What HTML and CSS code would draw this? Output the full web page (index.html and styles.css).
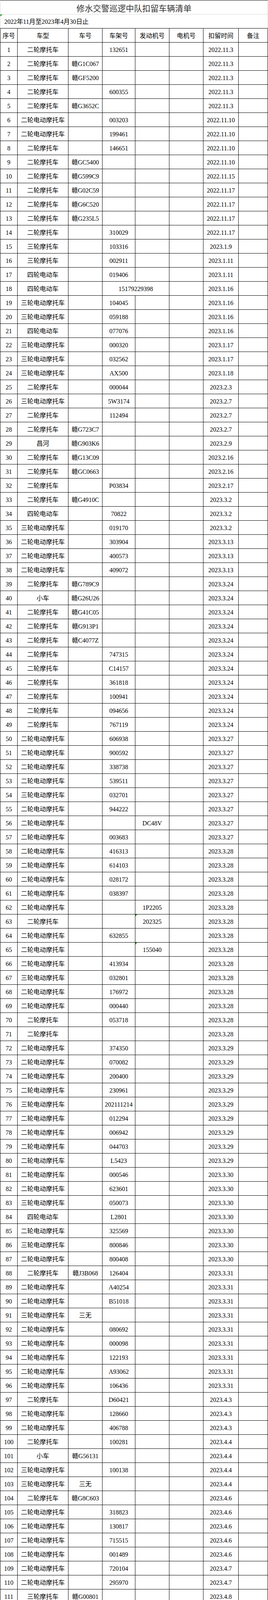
FILE: index.html
```html
<!DOCTYPE html>
<html lang="zh-CN">
<head>
<meta charset="utf-8">
<title>修水交警巡逻中队扣留车辆清单</title>
<link rel="stylesheet" href="styles.css">
</head>
<body>
<div class="page">
<div class="sheet">
<div class="title">修水交警巡逻中队扣留车辆清单</div>
<div class="sub flag">2022年11月至2023年4月30日止</div>
<div class="r"><span>序号</span><span>车型</span><span>车号</span><span>车架号</span><span>发动机号</span><span>电机号</span><span>扣留时间</span><span>备注</span></div>
<div class="r"><span>1</span><span>二轮摩托车</span><span></span><span>132651</span><span></span><span></span><span>2022.11.3</span><span></span></div>
<div class="r"><span>2</span><span>二轮摩托车</span><span>赣G1C067</span><span></span><span></span><span></span><span>2022.11.3</span><span></span></div>
<div class="r"><span>3</span><span>二轮摩托车</span><span>赣GF5200</span><span></span><span></span><span></span><span>2022.11.3</span><span></span></div>
<div class="r"><span>4</span><span>二轮摩托车</span><span></span><span>600355</span><span></span><span></span><span>2022.11.3</span><span></span></div>
<div class="r"><span>5</span><span>二轮摩托车</span><span>赣G3652C</span><span></span><span></span><span></span><span>2022.11.3</span><span></span></div>
<div class="r"><span>6</span><span>二轮电动摩托车</span><span></span><span>003203</span><span></span><span></span><span>2022.11.10</span><span></span></div>
<div class="r"><span>7</span><span>二轮电动摩托车</span><span></span><span>199461</span><span></span><span></span><span>2022.11.10</span><span></span></div>
<div class="r"><span>8</span><span>二轮摩托车</span><span></span><span>146651</span><span></span><span></span><span>2022.11.10</span><span></span></div>
<div class="r"><span>9</span><span>二轮摩托车</span><span>赣GC5400</span><span></span><span></span><span></span><span>2022.11.10</span><span></span></div>
<div class="r"><span>10</span><span>二轮摩托车</span><span>赣G599C9</span><span></span><span></span><span></span><span>2022.11.15</span><span></span></div>
<div class="r"><span>11</span><span>二轮摩托车</span><span>赣G02C59</span><span></span><span></span><span></span><span>2022.11.17</span><span></span></div>
<div class="r"><span>12</span><span>二轮摩托车</span><span>赣G6C520</span><span></span><span></span><span></span><span>2022.11.17</span><span></span></div>
<div class="r"><span>13</span><span>二轮摩托车</span><span>赣G235L5</span><span></span><span></span><span></span><span>2022.11.17</span><span></span></div>
<div class="r"><span>14</span><span>二轮摩托车</span><span></span><span>310029</span><span></span><span></span><span>2022.11.17</span><span></span></div>
<div class="r"><span>15</span><span>三轮摩托车</span><span></span><span>103316</span><span></span><span></span><span>2023.1.9</span><span></span></div>
<div class="r"><span>16</span><span>三轮摩托车</span><span></span><span>002911</span><span></span><span></span><span>2023.1.11</span><span></span></div>
<div class="r"><span>17</span><span>四轮电动车</span><span></span><span>019406</span><span></span><span></span><span>2023.1.11</span><span></span></div>
<div class="r"><span>18</span><span>四轮电动车</span><span></span><span class="span2">15179229398</span><span></span><span>2023.1.16</span><span></span></div>
<div class="r"><span>19</span><span>三轮电动摩托车</span><span></span><span>104045</span><span></span><span></span><span>2023.1.16</span><span></span></div>
<div class="r"><span>20</span><span>三轮电动摩托车</span><span></span><span>059188</span><span></span><span></span><span>2023.1.16</span><span></span></div>
<div class="r"><span>21</span><span>四轮电动车</span><span></span><span>077076</span><span></span><span></span><span>2023.1.16</span><span></span></div>
<div class="r"><span>22</span><span>三轮电动摩托车</span><span></span><span>000320</span><span></span><span></span><span>2023.1.17</span><span></span></div>
<div class="r"><span>23</span><span>三轮电动摩托车</span><span></span><span>032562</span><span></span><span></span><span>2023.1.17</span><span></span></div>
<div class="r"><span>24</span><span>三轮电动摩托车</span><span></span><span>AX500</span><span></span><span></span><span>2023.1.18</span><span></span></div>
<div class="r"><span>25</span><span>二轮摩托车</span><span></span><span>000044</span><span></span><span></span><span>2023.2.3</span><span></span></div>
<div class="r"><span>26</span><span>三轮电动摩托车</span><span></span><span>5W3174</span><span></span><span></span><span>2023.2.7</span><span></span></div>
<div class="r"><span>27</span><span>二轮摩托车</span><span></span><span>112494</span><span></span><span></span><span>2023.2.7</span><span></span></div>
<div class="r"><span>28</span><span>二轮摩托车</span><span>赣G723C7</span><span></span><span></span><span></span><span>2023.2.7</span><span></span></div>
<div class="r"><span>29</span><span>昌河</span><span>赣G903K6</span><span></span><span></span><span></span><span>2023.2.9</span><span></span></div>
<div class="r"><span>30</span><span>二轮摩托车</span><span>赣G13C09</span><span></span><span></span><span></span><span>2023.2.16</span><span></span></div>
<div class="r"><span>31</span><span>二轮摩托车</span><span>赣GC0663</span><span></span><span></span><span></span><span>2023.2.16</span><span></span></div>
<div class="r"><span>32</span><span>二轮摩托车</span><span></span><span>P03834</span><span></span><span></span><span>2023.2.17</span><span></span></div>
<div class="r"><span>33</span><span>二轮摩托车</span><span>赣G4910C</span><span></span><span></span><span></span><span>2023.3.2</span><span></span></div>
<div class="r"><span>34</span><span>四轮电动车</span><span></span><span>70822</span><span></span><span></span><span>2023.3.2</span><span></span></div>
<div class="r"><span>35</span><span>三轮电动摩托车</span><span></span><span>019170</span><span></span><span></span><span>2023.3.2</span><span></span></div>
<div class="r"><span>36</span><span>二轮电动摩托车</span><span></span><span>303904</span><span></span><span></span><span>2023.3.13</span><span></span></div>
<div class="r"><span>37</span><span>二轮电动摩托车</span><span></span><span>400573</span><span></span><span></span><span>2023.3.13</span><span></span></div>
<div class="r"><span>38</span><span>二轮电动摩托车</span><span></span><span>409072</span><span></span><span></span><span>2023.3.13</span><span></span></div>
<div class="r"><span>39</span><span>二轮摩托车</span><span>赣G789C9</span><span></span><span></span><span></span><span>2023.3.24</span><span></span></div>
<div class="r"><span>40</span><span>小车</span><span>赣G26U26</span><span></span><span></span><span></span><span>2023.3.24</span><span></span></div>
<div class="r"><span>41</span><span>二轮摩托车</span><span>赣G41C05</span><span></span><span></span><span></span><span>2023.3.24</span><span></span></div>
<div class="r"><span>42</span><span>二轮摩托车</span><span>赣G913P1</span><span></span><span></span><span></span><span>2023.3.24</span><span></span></div>
<div class="r"><span>43</span><span>二轮摩托车</span><span>赣C4077Z</span><span></span><span></span><span></span><span>2023.3.24</span><span></span></div>
<div class="r"><span>44</span><span>二轮摩托车</span><span></span><span>747315</span><span></span><span></span><span>2023.3.24</span><span></span></div>
<div class="r"><span>45</span><span>二轮摩托车</span><span></span><span>C14157</span><span></span><span></span><span>2023.3.24</span><span></span></div>
<div class="r"><span>46</span><span>二轮摩托车</span><span></span><span>361818</span><span></span><span></span><span>2023.3.24</span><span></span></div>
<div class="r"><span>47</span><span>二轮摩托车</span><span></span><span>100941</span><span></span><span></span><span>2023.3.24</span><span></span></div>
<div class="r"><span>48</span><span>二轮摩托车</span><span></span><span>094656</span><span></span><span></span><span>2023.3.24</span><span></span></div>
<div class="r"><span>49</span><span>二轮摩托车</span><span></span><span>767119</span><span></span><span></span><span>2023.3.24</span><span></span></div>
<div class="r"><span>50</span><span>二轮电动摩托车</span><span></span><span>606938</span><span></span><span></span><span>2023.3.27</span><span></span></div>
<div class="r"><span>51</span><span>二轮电动摩托车</span><span></span><span>900592</span><span></span><span></span><span>2023.3.27</span><span></span></div>
<div class="r"><span>52</span><span>二轮电动摩托车</span><span></span><span>338738</span><span></span><span></span><span>2023.3.27</span><span></span></div>
<div class="r"><span>53</span><span>二轮电动摩托车</span><span></span><span>539511</span><span></span><span></span><span>2023.3.27</span><span></span></div>
<div class="r"><span>54</span><span>三轮电动摩托车</span><span></span><span>032701</span><span></span><span></span><span>2023.3.27</span><span></span></div>
<div class="r"><span>55</span><span>二轮电动摩托车</span><span></span><span>944222</span><span></span><span></span><span>2023.3.27</span><span></span></div>
<div class="r"><span>56</span><span>二轮电动摩托车</span><span></span><span></span><span>DC48V</span><span></span><span>2023.3.27</span><span></span></div>
<div class="r"><span>57</span><span>二轮电动摩托车</span><span></span><span>003683</span><span></span><span></span><span>2023.3.27</span><span></span></div>
<div class="r"><span>58</span><span>二轮电动摩托车</span><span></span><span>416313</span><span></span><span></span><span>2023.3.28</span><span></span></div>
<div class="r"><span>59</span><span>二轮电动摩托车</span><span></span><span>614103</span><span></span><span></span><span>2023.3.28</span><span></span></div>
<div class="r"><span>60</span><span>二轮电动摩托车</span><span></span><span>028172</span><span></span><span></span><span>2023.3.28</span><span></span></div>
<div class="r"><span>61</span><span>二轮电动摩托车</span><span></span><span>038397</span><span></span><span></span><span>2023.3.28</span><span></span></div>
<div class="r"><span>62</span><span>二轮电动摩托车</span><span></span><span></span><span>1P2205</span><span></span><span>2023.3.28</span><span></span></div>
<div class="r"><span>63</span><span>二轮摩托车</span><span></span><span></span><span class="flag">202325</span><span></span><span>2023.3.28</span><span></span></div>
<div class="r"><span>64</span><span>二轮电动摩托车</span><span></span><span>632855</span><span></span><span></span><span>2023.3.28</span><span></span></div>
<div class="r"><span>65</span><span>二轮电动摩托车</span><span></span><span></span><span class="flag">155040</span><span></span><span>2023.3.28</span><span></span></div>
<div class="r"><span>66</span><span>二轮电动摩托车</span><span></span><span>413934</span><span></span><span></span><span>2023.3.28</span><span></span></div>
<div class="r"><span>67</span><span>三轮电动摩托车</span><span></span><span>032801</span><span></span><span></span><span>2023.3.28</span><span></span></div>
<div class="r"><span>68</span><span>二轮电动摩托车</span><span></span><span>176972</span><span></span><span></span><span>2023.3.28</span><span></span></div>
<div class="r"><span>69</span><span>二轮电动摩托车</span><span></span><span>000440</span><span></span><span></span><span>2023.3.28</span><span></span></div>
<div class="r"><span>70</span><span>二轮摩托车</span><span></span><span>053718</span><span></span><span></span><span>2023.3.28</span><span></span></div>
<div class="r"><span>71</span><span>二轮摩托车</span><span></span><span></span><span></span><span></span><span>2023.3.28</span><span></span></div>
<div class="r"><span>72</span><span>二轮电动摩托车</span><span></span><span>374350</span><span></span><span></span><span>2023.3.29</span><span></span></div>
<div class="r"><span>73</span><span>二轮电动摩托车</span><span></span><span>070082</span><span></span><span></span><span>2023.3.29</span><span></span></div>
<div class="r"><span>74</span><span>二轮电动摩托车</span><span></span><span>200400</span><span></span><span></span><span>2023.3.29</span><span></span></div>
<div class="r"><span>75</span><span>二轮电动摩托车</span><span></span><span>230961</span><span></span><span></span><span>2023.3.29</span><span></span></div>
<div class="r"><span>76</span><span>三轮电动摩托车</span><span></span><span>202111214</span><span></span><span></span><span>2023.3.29</span><span></span></div>
<div class="r"><span>77</span><span>二轮电动摩托车</span><span></span><span>012294</span><span></span><span></span><span>2023.3.29</span><span></span></div>
<div class="r"><span>78</span><span>二轮电动摩托车</span><span></span><span>006942</span><span></span><span></span><span>2023.3.29</span><span></span></div>
<div class="r"><span>79</span><span>二轮电动摩托车</span><span></span><span>044703</span><span></span><span></span><span>2023.3.29</span><span></span></div>
<div class="r"><span>80</span><span>二轮电动摩托车</span><span></span><span>L5423</span><span></span><span></span><span>2023.3.29</span><span></span></div>
<div class="r"><span>81</span><span>二轮电动摩托车</span><span></span><span>000546</span><span></span><span></span><span>2023.3.30</span><span></span></div>
<div class="r"><span>82</span><span>二轮电动摩托车</span><span></span><span>623601</span><span></span><span></span><span>2023.3.30</span><span></span></div>
<div class="r"><span>83</span><span>三轮电动摩托车</span><span></span><span>050073</span><span></span><span></span><span>2023.3.30</span><span></span></div>
<div class="r"><span>84</span><span>四轮电动车</span><span></span><span>L2801</span><span></span><span></span><span>2023.3.30</span><span></span></div>
<div class="r"><span>85</span><span>二轮电动摩托车</span><span></span><span>325569</span><span></span><span></span><span>2023.3.30</span><span></span></div>
<div class="r"><span>86</span><span>三轮电动摩托车</span><span></span><span>800846</span><span></span><span></span><span>2023.3.30</span><span></span></div>
<div class="r"><span>87</span><span>二轮电动摩托车</span><span></span><span>800408</span><span></span><span></span><span>2023.3.30</span><span></span></div>
<div class="r"><span>88</span><span>二轮摩托车</span><span>赣J3B068</span><span>126404</span><span></span><span></span><span>2023.3.31</span><span></span></div>
<div class="r"><span>89</span><span>二轮电动摩托车</span><span></span><span>A40254</span><span></span><span></span><span>2023.3.31</span><span></span></div>
<div class="r"><span>90</span><span>二轮电动摩托车</span><span></span><span>B51018</span><span></span><span></span><span>2023.3.31</span><span></span></div>
<div class="r"><span>91</span><span>三轮电动摩托车</span><span>三无</span><span></span><span></span><span></span><span>2023.3.31</span><span></span></div>
<div class="r"><span>92</span><span>二轮电动摩托车</span><span></span><span>080692</span><span></span><span></span><span>2023.3.31</span><span></span></div>
<div class="r"><span>93</span><span>二轮电动摩托车</span><span></span><span>000098</span><span></span><span></span><span>2023.3.31</span><span></span></div>
<div class="r"><span>94</span><span>二轮电动摩托车</span><span></span><span>122193</span><span></span><span></span><span>2023.3.31</span><span></span></div>
<div class="r"><span>95</span><span>二轮电动摩托车</span><span></span><span>A93062</span><span></span><span></span><span>2023.3.31</span><span></span></div>
<div class="r"><span>96</span><span>二轮电动摩托车</span><span></span><span>106436</span><span></span><span></span><span>2023.3.31</span><span></span></div>
<div class="r"><span>97</span><span>二轮摩托车</span><span></span><span>D60421</span><span></span><span></span><span>2023.4.3</span><span></span></div>
<div class="r"><span>98</span><span>二轮电动摩托车</span><span></span><span>128660</span><span></span><span></span><span>2023.4.3</span><span></span></div>
<div class="r"><span>99</span><span>二轮电动摩托车</span><span></span><span>406788</span><span></span><span></span><span>2023.4.3</span><span></span></div>
<div class="r"><span>100</span><span>二轮摩托车</span><span></span><span>100281</span><span></span><span></span><span>2023.4.4</span><span></span></div>
<div class="r"><span>101</span><span>小车</span><span>赣G56131</span><span></span><span></span><span></span><span>2023.4.4</span><span></span></div>
<div class="r"><span>102</span><span>三轮电动摩托车</span><span></span><span>100138</span><span></span><span></span><span>2023.4.4</span><span></span></div>
<div class="r"><span>103</span><span>三轮电动摩托车</span><span>三无</span><span></span><span></span><span></span><span>2023.4.4</span><span></span></div>
<div class="r"><span>104</span><span>二轮摩托车</span><span>赣G8C603</span><span></span><span></span><span></span><span>2023.4.6</span><span></span></div>
<div class="r"><span>105</span><span>二轮电动摩托车</span><span></span><span>318823</span><span></span><span></span><span>2023.4.6</span><span></span></div>
<div class="r"><span>106</span><span>二轮电动摩托车</span><span></span><span>130817</span><span></span><span></span><span>2023.4.6</span><span></span></div>
<div class="r"><span>107</span><span>二轮电动摩托车</span><span></span><span>715515</span><span></span><span></span><span>2023.4.6</span><span></span></div>
<div class="r"><span>108</span><span>二轮电动摩托车</span><span></span><span>001489</span><span></span><span></span><span>2023.4.6</span><span></span></div>
<div class="r"><span>109</span><span>二轮电动摩托车</span><span></span><span>720104</span><span></span><span></span><span>2023.4.7</span><span></span></div>
<div class="r"><span>110</span><span>二轮电动摩托车</span><span></span><span>295970</span><span></span><span></span><span>2023.4.7</span><span></span></div>
<div class="r"><span>111</span><span>三轮摩托车</span><span>赣G00801</span><span></span><span></span><span></span><span>2023.4.8</span><span></span></div>
<div class="r"><span>112</span><span>二轮摩托车</span><span>赣G966C9</span><span></span><span></span><span></span><span>2023.4.10</span><span></span></div>
<div class="r"><span>113</span><span>三轮电动摩托车</span><span></span><span>320048</span><span></span><span></span><span>2023.4.11</span><span></span></div>
<div class="r"><span>114</span><span>二轮摩托车</span><span></span><span>201119</span><span></span><span></span><span>2023.4.14</span><span></span></div>
<div class="r"><span>115</span><span>二轮电动摩托车</span><span></span><span>920074</span><span></span><span></span><span>2023.4.14</span><span></span></div>
<div class="r"><span>116</span><span>二轮摩托车</span><span>浙CXY853</span><span></span><span></span><span></span><span>2023.4.16</span><span></span></div>
<div class="r"><span>117</span><span>二轮摩托车</span><span>赣G8C756</span><span></span><span></span><span></span><span>2023.4.16</span><span></span></div>
<div class="r"><span>118</span><span>二轮电动摩托车</span><span></span><span>144641</span><span></span><span></span><span>2023.4.17</span><span></span></div>
<div class="r"><span>119</span><span>二轮电动摩托车</span><span></span><span>161334</span><span></span><span></span><span>2023.4.17</span><span></span></div>
<div class="r"><span>120</span><span>三轮电动摩托车</span><span>赣GV5025</span><span></span><span></span><span></span><span>2023.4.17</span><span></span></div>
<div class="r"><span>121</span><span>二轮电动摩托车</span><span></span><span>037204</span><span></span><span></span><span>2023.4.17</span><span></span></div>
<div class="r"><span>122</span><span>二轮摩托车</span><span></span><span>880042</span><span></span><span></span><span>2023.4.17</span><span></span></div>
<div class="r"><span>123</span><span>二轮电动摩托车</span><span></span><span>505662</span><span></span><span></span><span>2023.4.17</span><span></span></div>
<div class="r"><span>124</span><span>二轮摩托车</span><span></span><span>319018</span><span></span><span></span><span>2023.4.19</span><span></span></div>
<div class="r"><span>125</span><span>二轮摩托车</span><span>赣G37C97</span><span></span><span></span><span></span><span>2023.4.19</span><span></span></div>
<div class="r"><span>126</span><span>二轮摩托车</span><span></span><span>532619</span><span></span><span></span><span>2023.4.19</span><span></span></div>
<div class="r"><span>127</span><span>二轮摩托车</span><span></span><span>024490</span><span></span><span></span><span>2023.4.19</span><span></span></div>
<div class="r"><span>128</span><span>二轮电动摩托车</span><span></span><span>000392</span><span></span><span></span><span>2023.4.19</span><span></span></div>
<div class="r"><span>129</span><span>二轮摩托车</span><span></span><span>K13266</span><span></span><span></span><span>2023.4.19</span><span></span></div>
<div class="r"><span>130</span><span>二轮电动摩托车</span><span></span><span>101451</span><span></span><span></span><span>2023.4.20</span><span></span></div>
<div class="r"><span>131</span><span>二轮电动摩托车</span><span></span><span>102530</span><span></span><span></span><span>2023.4.20</span><span></span></div>
<div class="r"><span>132</span><span>二轮电动摩托车</span><span></span><span>734921</span><span></span><span></span><span>2023.4.20</span><span></span></div>
<div class="r"><span>133</span><span>二轮电动摩托车</span><span></span><span>857341</span><span></span><span></span><span>2023.4.20</span><span></span></div>
<div class="r"><span>134</span><span>二轮摩托车</span><span></span><span>E04615</span><span></span><span></span><span>2023.4.20</span><span></span></div>
<div class="r"><span>135</span><span>二轮摩托车</span><span>赣G5C632</span><span></span><span></span><span></span><span>2023.4.21</span><span></span></div>
<div class="r"><span>136</span><span>二轮电动摩托车</span><span></span><span>117760</span><span></span><span></span><span>2023.4.21</span><span></span></div>
<div class="r"><span>137</span><span>二轮电动摩托车</span><span></span><span>A92308</span><span></span><span></span><span>2023.4.21</span><span></span></div>
<div class="r"><span>138</span><span>二轮电动摩托车</span><span></span><span>126139</span><span></span><span></span><span>2023.4.21</span><span></span></div>
<div class="r"><span>139</span><span>二轮摩托车</span><span></span><span>708468</span><span></span><span></span><span>2023.4.21</span><span></span></div>
<div class="r"><span>140</span><span>二轮摩托车</span><span>赣G700C0</span><span></span><span></span><span></span><span>2023.4.21</span><span></span></div>
<div class="r"><span>141</span><span>二轮摩托车</span><span></span><span>004816</span><span></span><span></span><span>2023.4.23</span><span></span></div>
<div class="r"><span>142</span><span>二轮摩托车</span><span></span><span>750952</span><span></span><span></span><span>2023.4.25</span><span></span></div>
<div class="r"><span>143</span><span>二轮摩托车</span><span></span><span>007667</span><span></span><span></span><span>2023.4.25</span><span></span></div>
<div class="r"><span>144</span><span>二轮摩托车</span><span>赣G8C548</span><span></span><span></span><span></span><span>2023.4.25</span><span></span></div>
<div class="r s"><span>145</span><span>二轮摩托车</span><span>赣G6015C</span><span></span><span></span><span></span><span>2023.4.25</span><span></span></div>
<div class="r s"><span>146</span><span>二轮摩托车</span><span></span><span>050197</span><span></span><span></span><span>2023.4.26</span><span></span></div>
<div class="r s"><span>147</span><span>二轮电动摩托车</span><span></span><span>096122</span><span></span><span></span><span>2023.4.27</span><span></span></div>
<div class="r s"><span>148</span><span>二轮电动摩托车</span><span></span><span>039116</span><span></span><span></span><span>2023.4.27</span><span></span></div>
<div class="r s"><span>149</span><span>二轮电动摩托车</span><span></span><span>160100</span><span></span><span></span><span>2023.4.27</span><span></span></div>
<div class="r s"><span>150</span><span>二轮电动摩托车</span><span></span><span>053063</span><span></span><span></span><span>2023.4.27</span><span></span></div>
<div class="r s"><span>151</span><span>二轮电动摩托车</span><span></span><span>702884</span><span></span><span></span><span>2023.4.28</span><span></span></div>
<div class="r s"><span>152</span><span>二轮电动摩托车</span><span></span><span>904933</span><span></span><span></span><span>2023.4.28</span><span></span></div>
<div class="r s"><span>153</span><span>二轮电动摩托车</span><span></span><span>016490</span><span></span><span></span><span>2023.4.28</span><span></span></div>
<div class="r s"><span>154</span><span>二轮电动摩托车</span><span></span><span>042801</span><span></span><span></span><span>2023.4.28</span><span></span></div>
<div class="r s"><span>155</span><span>二轮电动摩托车</span><span></span><span>501303</span><span></span><span></span><span>2023.4.28</span><span></span></div>
<div class="r s"><span>156</span><span>二轮电动摩托车</span><span></span><span>107633</span><span></span><span></span><span>2023.4.29</span><span></span></div>
<div class="r s"><span>157</span><span>二轮摩托车</span><span></span><span>3R3190</span><span></span><span></span><span>2023.4.29</span><span></span></div>
<div class="r s"><span>158</span><span>二轮摩托车</span><span></span><span>F00143</span><span></span><span></span><span>2023.4.29</span><span></span></div>
<div class="r s"><span>159</span><span>二轮摩托车</span><span>三无</span><span></span><span></span><span></span><span>2022.1.4</span><span></span></div>
<div class="r s"><span>160</span><span>三轮电动摩托车</span><span></span><span>039170</span><span></span><span></span><span>2023.1.16</span><span></span></div>
<div class="r s"><span>161</span><span>三轮电动摩托车</span><span></span><span>11601260</span><span></span><span></span><span>2023.1.17</span><span></span></div>
<div class="r s"><span>162</span><span>三轮电动摩托车</span><span></span><span>010339</span><span></span><span></span><span>2023.1.19</span><span></span></div>
<div class="r s"><span>163</span><span>三轮电动摩托车</span><span></span><span>200166</span><span></span><span></span><span>2023.3.27</span><span></span></div>
<div class="r s"><span>164</span><span>二轮电动摩托车</span><span></span><span>924121</span><span></span><span></span><span>2023.3.27</span><span></span></div>
<div class="r s"><span>165</span><span>三轮电动摩托车</span><span></span><span>606029</span><span></span><span></span><span>2023.3.28</span><span></span></div>
<div class="r s"><span>166</span><span>二轮电动摩托车</span><span></span><span>528269</span><span></span><span></span><span>2023.3.28</span><span></span></div>
<div class="r s"><span>167</span><span>三轮电动摩托车</span><span></span><span>P54200</span><span></span><span></span><span>2023.3.28</span><span></span></div>
</div>
<div class="wm">
<svg class="wm-icon" width="30" height="18" viewBox="0 0 30 18" aria-hidden="true">
<circle cx="10" cy="9" r="7" fill="rgba(255,255,255,0.85)" stroke="rgba(90,90,90,0.55)" stroke-width="1.2"/>
<circle cx="19" cy="11" r="5.5" fill="rgba(255,255,255,0.85)" stroke="rgba(90,90,90,0.55)" stroke-width="1.2"/>
<circle cx="7.5" cy="7.5" r="1" fill="rgba(90,90,90,0.6)"/>
<circle cx="12.5" cy="7.5" r="1" fill="rgba(90,90,90,0.6)"/>
</svg>
<span class="wm-text">修水公安交警</span>
</div>
</div>
</body>
</html>
```

FILE: styles.css
```css
html, body {
  margin: 0;
  padding: 0;
  background: #ffffff;
}

.page {
  position: relative;
  width: 685px;
  height: 6030px;
  overflow: hidden;
}

.sheet {
  width: 685px;
  font-family: "Liberation Serif", "Noto Sans CJK SC", serif;
  font-size: 16px;
  line-height: 1;
  color: #000000;
}

.title {
  box-sizing: border-box;
  height: 37px;
  border: 1px solid #d6d6d6;
  border-top-color: #000000;
  padding-top: 3px;
  display: flex;
  align-items: center;
  justify-content: center;
  font-family: "Noto Sans CJK SC", sans-serif;
  font-size: 21px;
  color: #333333;
  white-space: nowrap;
}

.sub {
  box-sizing: border-box;
  height: 36px;
  border-left: 1px solid #d6d6d6;
  border-right: 1px solid #d6d6d6;
  border-bottom: 1px solid #000000;
  padding: 3px 0 0 10px;
  display: flex;
  align-items: center;
  white-space: nowrap;
}

.r {
  display: grid;
  grid-template-columns: 45px 130px 87px 84px 87px 87px 90px 75px;
  grid-template-rows: 36px;
  height: 36px;
}

.r.s {
  grid-template-rows: 32px;
  height: 32px;
}

.r > span {
  box-sizing: border-box;
  display: flex;
  align-items: center;
  justify-content: center;
  padding-top: 2px;
  border-right: 1px solid #000000;
  border-bottom: 1px solid #000000;
  white-space: nowrap;
  min-width: 0;
}

.r > span:first-child {
  border-left: 1px solid #000000;
}

.r > .span2 {
  grid-column: span 2;
}

.flag {
  position: relative;
}

.flag::before {
  content: "";
  position: absolute;
  left: 0;
  top: 0;
  width: 0;
  height: 0;
  border-style: solid;
  border-width: 5px 5px 0 0;
  border-color: #139a13 transparent transparent transparent;
}

.wm {
  position: absolute;
  left: 528px;
  top: 5991px;
  display: flex;
  align-items: center;
  gap: 2px;
}

.wm-icon {
  display: block;
}

.wm-text {
  font-family: "Noto Sans CJK SC", sans-serif;
  font-size: 17px;
  line-height: 18px;
  color: rgba(255, 255, 255, 0.92);
  text-shadow: 0 0 1px rgba(0, 0, 0, 0.55), 1px 1px 1px rgba(0, 0, 0, 0.35);
}
```
